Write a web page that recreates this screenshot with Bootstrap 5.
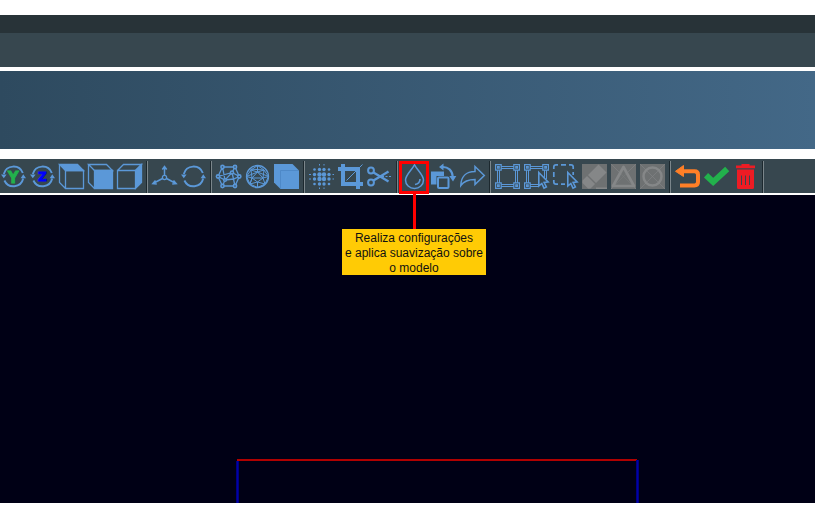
<!DOCTYPE html>
<html lang="pt-BR">
<head>
<meta charset="utf-8">
<meta name="viewport" content="width=device-width, initial-scale=1">
<title>Suavização</title>
<link href="https://cdn.jsdelivr.net/npm/bootstrap@5.3.0/dist/css/bootstrap.min.css" rel="stylesheet">
<style>
body{font-family:"Liberation Sans",Arial,sans-serif;overflow:hidden}
.app-window{width:815px;padding-top:15px}
.title-strip{height:18px;background:#283338}
.menu-strip{height:34px;background:#37474f}
.banner{height:78px;margin:4px 0 10px;background:linear-gradient(90deg,#2e4a5f,#436887)}
.toolbar{height:34px;padding:5px 0 0 1px;gap:4px;background:#37474f}
.tool{width:25px;height:25px;flex:none;color:#5b98d8}
.tool svg{display:block;width:25px;height:25px;fill:none;stroke:currentColor;stroke-width:1.3;overflow:visible}
.tool .solid{fill:currentColor}
.tool .axis{font:bold 15px "DejaVu Sans",sans-serif;text-anchor:middle;stroke-width:.9}
.tool-off{background:#6e7172;color:#858788}
.divider{width:2px;height:32px;margin-top:-3px;flex:none;border-left:1px solid #1c282e;border-right:1px solid #7b868b}
.viewport{height:308px;margin-top:2px;padding:264px 0 0 236px;background:#000015}
.wire{width:404px;height:44px}
.wire svg{display:block}
.highlight{left:-3px;top:-3px;width:30px;height:33px;border:3px solid #f00}
.leader{left:11px;top:30px;width:3px;height:35px;background:#f00}
.callout{left:-60px;top:65px;width:144px;height:46px;padding-top:2px;background:#ffcb05;color:#111;font-size:12px;line-height:15px;white-space:nowrap;z-index:2}
</style>
<script src="https://cdn.jsdelivr.net/npm/bootstrap@5.3.0/dist/js/bootstrap.bundle.min.js"></script>
</head>
<body class="bg-white">
<svg width="0" height="0" class="position-absolute">
  <symbol id="orbit" viewBox="0 0 25 25" overflow="visible">
    <path d="M2.800 10A10 10 0 0 1 21.800 9M22.200 14.500A10 10 0 0 1 3.400 16.500" fill="none" stroke="#5b98d8" stroke-width="1.900"/>
    <path d="M0 10.500h5.600L2.800 14.200zM19.600 14.200H25l-2.700-3.900z" fill="#5b98d8" stroke="none"/>
  </symbol>
</svg>
<main class="app-window">
  <div class="title-strip"></div>
  <div class="menu-strip"></div>
  <div class="banner"></div>
  <div class="toolbar d-flex align-items-start">
    <div class="tool"><svg viewBox="0 0 25 25"><use href="#orbit"/><text class="axis" x="12.300" y="18.700" fill="#22b14c" stroke="#22b14c">Y</text></svg></div>
    <div class="tool"><svg viewBox="0 0 25 25"><use href="#orbit"/><text class="axis" x="12.300" y="17" style="font-size:12px" fill="#0000ff" stroke="#0000ff">Z</text></svg></div>
    <div class="tool"><svg viewBox="0 0 25 25"><path class="solid" d="M.5.500h18l6 6h-18z"/><path d="M.5.500v18l6 6h18v-18h-18v18"/></svg></div>
    <div class="tool"><svg viewBox="0 0 25 25"><path class="solid" d="M6.500 6.500h18v18h-18z"/><path d="M.5.500h18l6 6h-18zM.5.500v18l6 6"/></svg></div>
    <div class="tool"><svg viewBox="0 0 25 25"><path class="solid" d="M18.500 6.500l6-6v18l-6 6z"/><path d="M.5 6.500l6-6h18l-6 6H.5v18h18"/></svg></div>
    <div class="divider"></div>
    <div class="tool"><svg viewBox="0 0 25 25"><path stroke-width="1.500" d="M12.500 11.500V3M10.300 5.500l2.200-3 2.200 3M10.500 14.500L1 19.500M3.500 16.500L.8 19.600l4 .4M14.500 14.500l9.500 5M21.500 16.500l2.700 3.100-4 .4"/><circle cx="12.500" cy="13.500" r="2.100"/></svg></div>
    <div class="tool"><svg viewBox="0 0 25 25"><use href="#orbit"/></svg></div>
    <div class="divider"></div>
    <div class="tool"><svg viewBox="0 0 25 25"><path stroke-width="1.300" d="M6.500 3H19l4.300 9.500L19 22H6.500L2 12.500zM6.500 3L9 16 2 12.500 16 8.500 19 3M6.500 22L9 16l7-7.500 1.500 6.500L19 22M9 16l8.500-1 5.800-2.500L16 8.500"/><g fill="#37474f" stroke-width="1.600"><circle cx="6.500" cy="3" r="1.600"/><circle cx="19" cy="3" r="1.600"/><circle cx="2" cy="12.500" r="1.600"/><circle cx="23.300" cy="12.500" r="1.600"/><circle cx="6.500" cy="22" r="1.600"/><circle cx="19" cy="22" r="1.600"/><circle cx="16" cy="8.500" r="1.500"/><circle cx="9" cy="16" r="1.300"/></g></svg></div>
    <div class="tool"><svg viewBox="0 0 25 25"><circle cx="12.500" cy="12.500" r="11"/><path stroke-width="1" d="M12.500 1.500L6 6l-4.500 6.500L5 20l7.500 3.500L20 20l3.500-7.500L19 6zM6 6l6.500 2L19 6l-1 8-5.500-6L7 14 6 6M1.500 12.500L7 14l5.500 4 5.500-4 5.500-1.500M12.500 1.500V8M7 14h11M7 14l-2 6 7.500-2 7.500 2-2-6M12.500 18v5.500M4 5l15 1M5 20l2-6M12.500 8L1.500 12.500M12.500 8l11 4.500"/></svg></div>
    <div class="tool"><svg viewBox="0 0 25 25"><path class="solid" stroke="none" d="M0 0h18.500L25 6.500V25H6.500L0 18.500z"/><path d="M6.500 24.500v-18H24" stroke="#4b85c4" stroke-width=".8"/></svg></div>
    <div class="divider"></div>
    <div class="tool"><svg viewBox="0 0 25 25"><g class="solid" stroke="none">
      <circle cx="10.500" cy="10.500" r="2.200"/><circle cx="15" cy="10.500" r="2.200"/><circle cx="10.500" cy="15" r="2.200"/><circle cx="15" cy="15" r="2.200"/>
      <circle cx="10.500" cy="5.500" r="1.700"/><circle cx="15" cy="5.500" r="1.700"/><circle cx="10.500" cy="20" r="1.700"/><circle cx="15" cy="20" r="1.700"/><circle cx="5.500" cy="10.500" r="1.700"/><circle cx="5.500" cy="15" r="1.700"/><circle cx="20" cy="10.500" r="1.700"/><circle cx="20" cy="15" r="1.700"/>
      <circle cx="5.500" cy="5.500" r="1.300"/><circle cx="20" cy="5.500" r="1.300"/><circle cx="5.500" cy="20" r="1.300"/><circle cx="20" cy="20" r="1.300"/>
      <path d="M10 0h1v1.500h-1zM14.500 0h1v1.500h-1zM10 23.500h1V25h-1zM14.500 23.500h1V25h-1zM0 10h2v1H0zM0 14.500h2v1H0zM23.500 10H25v1h-1.500zM23.500 14.500H25v1h-1.500z"/></g></svg></div>
    <div class="tool"><svg viewBox="0 0 25 25"><path stroke-width="4" d="M5 0v20h20M0 5h20v20"/><path stroke-width="1" d="M8.500 16.500L24.500.500"/></svg></div>
    <div class="tool"><svg viewBox="0 0 25 25"><circle cx="4" cy="6.500" r="2.900" stroke-width="2"/><circle cx="4" cy="18.500" r="2.900" stroke-width="2"/><path stroke-width="2.300" d="M6.500 8.500L21.500 17.500M6.500 16.500L21.500 7.500"/><path stroke-width="1" stroke-dasharray="2 1.500" d="M15 12.500h10"/></svg></div>
    <div class="divider"></div>
    <div class="tool position-relative">
      <svg viewBox="0 0 25 25"><path stroke-width="1.500" d="M12.500.8C10 6 3.500 11 3.500 16a9 8.400 0 0 0 18 0c0-5-6.500-10-9-15.200z"/><path stroke-width="1.600" d="M18 15c0 3-2 5-5 5.500"/></svg>
      <div class="highlight position-absolute"></div>
      <div class="leader position-absolute"></div>
      <div class="callout position-absolute text-center">Realiza configurações<br>e aplica suavização sobre<br>o modelo</div>
    </div>
    <div class="tool"><svg viewBox="0 0 25 25"><path class="solid" stroke="none" d="M0 7.500h13v4.500H5.500v8.500H0z"/><rect x="7" y="13.500" width="10.500" height="10.500" rx="1" stroke-width="2"/><path stroke-width="2.100" d="M11 3c6-.5 10.500 3.500 10.800 10"/><path class="solid" stroke="none" d="M12.500-.5v7L8 3zM18.300 12h7L22 17.500z"/></svg></div>
    <div class="tool"><svg viewBox="0 0 25 25"><path stroke-width="1.500" d="M15 2.500L24.300 11.500 15 20.500v-5C8 15.500 4 17 .8 21.500 1 13 6 7.500 15 7.500z"/></svg></div>
    <div class="divider"></div>
    <div class="tool"><svg viewBox="0 0 25 25"><path stroke-width="1" d="M6 2.500h13M6 4.500h13M6 20.500h13M6 22.500h13M2.500 6v13M4.500 6v13M20.500 6v13M22.500 6v13"/><path stroke-width="1.200" d="M.6.600h5.600v5.600H.6zM18.800.600h5.600v5.600h-5.600zM.6 18.800h5.600v5.600H.6zM18.800 18.800h5.600v5.600h-5.600zM2.600 2.600h1.600v1.600H2.600zM20.800 2.600h1.600v1.600h-1.600zM2.600 20.800h1.600v1.600H2.600zM20.800 20.800h1.600v1.600h-1.600z"/></svg></div>
    <div class="tool"><svg viewBox="0 0 25 25"><path stroke-width="1" d="M6 2.500h13M6 4.500h13M6 20.500h8M6 22.500h8M2.500 6v13M4.500 6v13M20.500 6v8M22.500 6v9"/><path stroke-width="1.200" d="M.6.600h5.600v5.600H.6zM18.800.600h5.600v5.600h-5.600zM.6 18.800h5.600v5.600H.6zM2.600 2.600h1.600v1.600H2.600zM20.800 2.600h1.600v1.600h-1.600zM2.600 20.800h1.600v1.600H2.600z"/><path fill="#37474f" stroke-width="1.600" d="M14.800 8.500l9.300 9.500-4 .5 2.300 4.500-2.400 1.200-2.200-4.700-3 2.500z"/></svg></div>
    <div class="tool"><svg viewBox="0 0 25 25"><path stroke-width="1.700" d="M.8 5V3Q.8.800 3 .8h2M8 .8h5M16 .8h2Q20.200.800 20.200 3v2M.8 8v5M.8 16v2Q.8 20.200 3 20.200h2M8 20.200h4M20.200 8v3"/><path fill="#37474f" stroke-width="1.600" d="M14.800 8.500l9.300 9.500-4 .5 2.300 4.500-2.400 1.200-2.200-4.700-3 2.500z"/></svg></div>
    <div class="tool tool-off"><svg viewBox="0 0 25 25"><path class="solid" stroke="none" d="M16.500.500l8 8-10.500 10.500-8-8zM5 12l8 8-4.500 4.500H6l-5.500-5.500v-2.500zM14 23.500h11V25H14z"/></svg></div>
    <div class="tool tool-off"><svg viewBox="0 0 25 25"><path stroke-width=".6" d="M0 0l25 25M25 0L0 25"/><path fill="#6e7172" fill-opacity=".5" stroke-width="2.700" stroke-linejoin="round" d="M12.500 3L23 22H2z"/></svg></div>
    <div class="tool tool-off"><svg viewBox="0 0 25 25"><path stroke-width=".6" d="M0 0l25 25M25 0L0 25"/><circle cx="12.500" cy="12.500" r="9" stroke-width="2.500"/></svg></div>
    <div class="divider"></div>
    <div class="tool"><svg viewBox="0 0 25 25"><path stroke="#ff7f27" stroke-width="4" stroke-linejoin="round" d="M7 7.300h12.500q3.500 0 3.500 3.500v7q0 3.700-3.500 3.700H5"/><path fill="#ff7f27" stroke="#ff7f27" stroke-width="1" stroke-linejoin="round" d="M.5 7.300L8.500 1.500v11z"/></svg></div>
    <div class="tool"><svg viewBox="0 0 25 25"><path stroke="#22b14c" stroke-width="6" d="M2 11.200l7.200 6.800L23.200 5"/></svg></div>
    <div class="tool"><svg viewBox="0 0 25 25"><path fill="#ed1c24" stroke="none" d="M3 1.500h5.500V0h8v1.500H22v2.700H3zM4 5.500h17V23.500q0 1.500-1.500 1.500h-14Q4 25 4 23.500z"/><path stroke="#37474f" stroke-width="1" d="M8.500 11.500v9.500M12.500 11.500v9.500M16.500 11.500v9.500"/></svg></div>
    <div class="divider"></div>
  </div>
  <div class="viewport">
    <div class="wire"><svg width="404" height="44" viewBox="0 0 404 44">
      <path d="M1 0h400v2H1z" fill="#b00000"/>
      <path d="M0 2h3v42H0zM400 1h3v43h-3z" fill="#000080"/>
      <path d="M1 2h1v42H1zM401 1h1v43h-1z" fill="#00a"/>
    </svg></div>
  </div>
</main>
</body>
</html>
